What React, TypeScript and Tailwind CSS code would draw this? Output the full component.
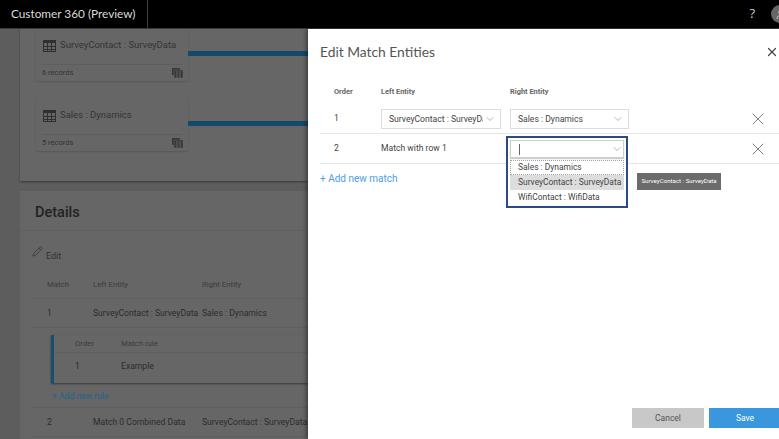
import React from "react";
import { X, ChevronDown, Pencil, User } from "lucide-react";

function TableIcon() {
  return (
    <svg width="13" height="12" viewBox="0 0 13 12" className="shrink-0">
      <rect x="0.5" y="0.5" width="12" height="11" fill="none" stroke="#2f2f2f" />
      <rect x="0" y="0" width="13" height="3" fill="#2f2f2f" />
      <path d="M4.5 3V12M8.5 3V12M0 6.5H13M0 9.5H13" stroke="#2f2f2f" strokeWidth="1" />
    </svg>
  );
}

function RecordsIcon() {
  return (
    <svg width="11" height="10" viewBox="0 0 11 10" className="shrink-0 -mr-[1px]">
      <rect x="0" y="0" width="8" height="7" fill="#3a3a3a" />
      <rect x="2" y="2" width="9" height="8" fill="#3a3a3a" stroke="#5f5f5f" strokeWidth="0.5" />
      <path d="M5 3v7M8 3v7" stroke="#777" strokeWidth="0.7" />
    </svg>
  );
}

function EntityCard({ name, records, top }: { name: string; records: string; top: string }) {
  return (
    <div className={`flex ${top}`}>
      <div className="w-[152px] h-[54px] ml-[36px] shrink-0 bg-[#666666] rounded-[2px] shadow-[0_1px_2px_rgba(0,0,0,0.15)] px-[6px] flex flex-col">
        <div className="h-[37px] flex items-center gap-[4px] px-[1px] text-[9.5px] text-[#343434]">
          <TableIcon />
          <span>{name}</span>
        </div>
        <div className="border-t border-[#5d5d5d] flex-1 flex items-center justify-between text-[7.5px] text-[#333333]">
          <span>{records}</span>
          <RecordsIcon />
        </div>
      </div>
      <div className="h-[5px] mt-[24px] flex-1 bg-[#13496b]" />
    </div>
  );
}

function MatchSelect({ text, width }: { text: string; width: string }) {
  return (
    <div className={`${width} h-[20px] bg-white border border-[#dcdcdc] flex items-center pl-[7px] pr-[4px] gap-[1px] text-[8.6px] text-[#444444] whitespace-nowrap`}>
      <span className="flex-1 min-w-0 overflow-hidden pt-[1px]">{text}</span>
      <ChevronDown size={12} strokeWidth={1} className="text-[#666666] shrink-0" />
    </div>
  );
}

export default function App() {
  return (
    <div className="w-[779px] h-[439px] overflow-hidden flex flex-col font-['Roboto',sans-serif] bg-[#5d5d5d]">
      <header className="h-[29px] shrink-0 bg-black border-b border-[#3a3a3a] flex items-center text-[#d9d9d9]">
        <div className="w-[148px] h-full pl-[11px] flex items-center border-r border-[#3d3d3d] font-['Lato',sans-serif] text-[11.8px] whitespace-nowrap">
          Customer 360 (Preview)
        </div>
        <div className="flex-1" />
        <span className="text-[13px] mr-[16px] text-[#cccccc] font-['Open_Sans',sans-serif] shrink-0">?</span>
        <div className="w-[18px] h-[18px] shrink-0 -mr-[10px] rounded-full bg-[#666666] flex items-center justify-center">
          <User size={11} className="text-[#cfcfcf]" />
        </div>
      </header>

      <div className="flex-1 flex min-h-0">
        <main className="w-[308px] shrink-0 overflow-hidden">
          <div className="ml-[20px] h-[152px] bg-[#666666] shadow-[0_1px_2px_rgba(0,0,0,0.4)]">
            <div className="-ml-[20px] flex flex-col">
              <EntityCard name="SurveyContact : SurveyData" records="6 records" top="-mt-[2px]" />
              <EntityCard name="Sales : Dynamics" records="5 records" top="mt-[16px]" />
            </div>
          </div>

          <section className="ml-[20px] mt-[10px] bg-[#666666] h-[260px]">
            <h2 className="h-[40px] pt-[5px] pl-[15px] flex items-center text-[14.5px] font-medium text-[#222222] border-b border-[#616161]">Details</h2>
            <div className="pl-[12px] pt-[15px] h-[41px] flex items-start gap-[3px] text-[9px] text-[#333333]">
              <Pencil size={11} strokeWidth={1.4} className="text-[#2f2f2f]" />
              <span className="mt-[4px]">Edit</span>
            </div>
            <div className="ml-[12px]">
              <div className="h-[27px] flex items-center border-b border-[#5f5f5f] text-[7.8px] text-[#3c3c3c] pl-[15px]">
                <span className="w-[46px] shrink-0">Match</span>
                <span className="w-[109px] shrink-0">Left Entity</span>
                <span>Right Entity</span>
              </div>
              <div className="h-[29px] flex items-center border-b border-[#5f5f5f] text-[8.6px] text-[#2c2c2c] pl-[15px] whitespace-nowrap">
                <span className="w-[46px] shrink-0">1</span>
                <span className="w-[109px] shrink-0">SurveyContact : SurveyData</span>
                <span>Sales : Dynamics</span>
              </div>
              <div className="ml-[19px] mt-[7px] h-[48px] border-l-[3px] border-[#14506f] bg-[#666666] shadow-[0_1px_2px_rgba(0,0,0,0.45)]">
                <div className="h-[18px] flex items-center border-b border-[#5f5f5f] pl-[21px] text-[7.8px] text-[#3c3c3c]">
                  <span className="w-[46px]">Order</span>
                  <span>Match rule</span>
                </div>
                <div className="h-[30px] pb-[4px] flex items-center pl-[21px] text-[8.6px] text-[#2c2c2c]">
                  <span className="w-[46px]">1</span>
                  <span>Example</span>
                </div>
              </div>
              <div className="h-[25px] pt-[3px] border-b border-[#5f5f5f] pl-[20px] flex items-center text-[8.6px] text-[#22648f]">+ Add new rule</div>
              <div className="h-[29px] flex items-center border-b border-[#5f5f5f] text-[8.6px] text-[#2c2c2c] pl-[15px] whitespace-nowrap">
                <span className="w-[46px] shrink-0">2</span>
                <span className="w-[109px] shrink-0">Match 0 Combined Data</span>
                <span>SurveyContact : SurveyData</span>
              </div>
            </div>
          </section>
        </main>

        <aside className="flex-1 bg-white relative shadow-[-2px_0_4px_rgba(0,0,0,0.4)] flex flex-col min-w-0">
          <div className="h-[46px] pl-[12px] flex items-center justify-between">
            <h1 className="font-['Lato',sans-serif] text-[13.8px] text-[#555555]">Edit Match Entities</h1>
            <X size={14} strokeWidth={2.1} className="text-[#444444] -mt-[1px] shrink-0" />
          </div>

          <div className="ml-[12px] flex-1">
            <div className="mt-[7px] mb-[3px] h-[19px] flex items-center text-[7.4px] font-bold text-[#666666]">
              <span className="w-[61px] pl-[14px]">Order</span>
              <span className="w-[129px]">Left Entity</span>
              <span>Right Entity</span>
            </div>
            <div className="h-[30px] flex items-center border-b border-[#e6e6e6] text-[8.6px] text-[#444444]">
              <span className="w-[61px] pl-[14px]">1</span>
              <div className="w-[129px]"><MatchSelect text="SurveyContact : SurveyData" width="w-[120px]" /></div>
              <MatchSelect text="Sales : Dynamics" width="w-[119px]" />
              <X size={20} strokeWidth={1} className="ml-[119px] text-[#666666] shrink-0" />
            </div>
            <div className="h-[30px] flex items-center border-b border-[#e6e6e6] text-[8.6px] text-[#444444]">
              <span className="w-[61px] pl-[14px]">2</span>
              <span className="w-[129px]">Match with row 1</span>
              <div className="w-[119px]" />
              <X size={20} strokeWidth={1} className="ml-[119px] text-[#666666] shrink-0" />
            </div>
            <div className="mt-[7px] text-[10px] text-[#4ba0e6]">+ Add new match</div>
          </div>

          <div className="h-[20px] mb-[11px] flex gap-[5px] pl-[324px]">
            <button className="w-[72px] h-[20px] shrink-0 bg-[#c8c8c8] text-[8.5px] text-[#555555]">Cancel</button>
            <button className="w-[72px] h-[20px] shrink-0 bg-[#3a96dd] text-[8.5px] text-white">Save</button>
          </div>

          <div className="absolute left-[198px] top-[107px] w-[122px] h-[72px] border-2 border-[#2b4a86] bg-white px-[2px] pt-[2px] text-[8.45px] text-[#444444]">
            <div className="h-[18px] border border-[#cfcfcf] shadow-[0_1px_1px_rgba(0,0,0,0.2)] flex items-center justify-between pl-[8px] pr-[1px]">
              <span className="w-px h-[11px] bg-[#666666]" />
              <ChevronDown size={12} strokeWidth={1} className="text-[#666666] -mr-[1px]" />
            </div>
            <div className="mt-[2px] h-[15px] pl-[7px] flex items-center border border-dotted border-[#a0a0a0] whitespace-nowrap">Sales : Dynamics</div>
            <div className="h-[15px] pl-[8px] flex items-center bg-[#dddddd] whitespace-nowrap">SurveyContact : SurveyData</div>
            <div className="h-[15px] pl-[8px] flex items-center whitespace-nowrap">WifiContact : WifiData</div>
          </div>

          <div className="absolute left-[329px] top-[144px] w-[84px] h-[17px] bg-[#6b6b6b] flex items-center justify-center text-[6.15px] text-white whitespace-nowrap">
            SurveyContact : SurveyData
          </div>
        </aside>
      </div>
    </div>
  );
}
